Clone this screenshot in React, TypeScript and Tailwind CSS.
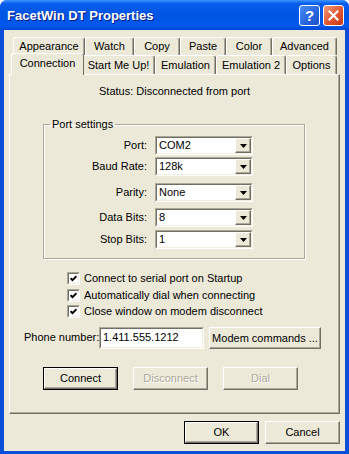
import type { ReactNode } from "react"

const raised =
  "border border-t-white border-l-white border-r-[#716f64] border-b-[#716f64] shadow-[inset_-1px_-1px_0_#aca899]"
const sunkenOuter = "border border-t-[#aca899] border-l-[#aca899] border-r-white border-b-white"
const sunkenInner = "border border-t-[#716f64] border-l-[#716f64] border-r-[#f1efe2] border-b-[#f1efe2]"

function Button({ children, def, disabled, w = "w-[75px]", h = "h-[23px]" }: { children: ReactNode; def?: boolean; disabled?: boolean; w?: string; h?: string }) {
  return (
    <div className={`${w} ${h} ${def ? "border border-black" : ""} flex shrink-0`}>
      <div className={`flex flex-1 items-center justify-center bg-[#ece9d8] ${raised}`}>
        <span className={`whitespace-nowrap ${disabled ? "text-[#aca899] [text-shadow:1px_1px_0_#fff]" : ""}`}>{children}</span>
      </div>
    </div>
  )
}

function Combo({ value }: { value: string }) {
  return (
    <div className={`flex h-[19px] w-[98px] ${sunkenOuter}`}>
      <div className={`flex flex-1 items-center bg-white ${sunkenInner}`}>
        <span className="flex-1 pl-[2px]">{value}</span>
        <div className={`flex h-full w-[16px] items-center justify-center bg-[#ece9d8] ${raised}`}>
          <svg width="7" height="4" viewBox="0 0 7 4">
            <path d="M0 0h7L3.5 4z" fill="#000" />
          </svg>
        </div>
      </div>
    </div>
  )
}

function Check({ label, className = "" }: { label: string; className?: string }) {
  return (
    <div className={`flex h-[13px] items-center ${className}`}>
      <div className={`flex h-[13px] w-[13px] ${sunkenOuter}`}>
        <div className={`flex flex-1 items-center justify-center bg-white ${sunkenInner}`}>
          <svg width="7" height="7" viewBox="0 0 7 7">
            <path d="M0.5 3.2 L2.5 5.2 L6.5 1.2" stroke="#000" strokeWidth="2" fill="none" />
          </svg>
        </div>
      </div>
      <span className="ml-[4px]">{label}</span>
    </div>
  )
}

function Row({ label, value, className = "" }: { label: string; value: string; className?: string }) {
  return (
    <div className={`flex items-center ${className}`}>
      <span className="w-[104px] pr-[1px] text-right">{label}</span>
      <div className="ml-[7px]">
        <Combo value={value} />
      </div>
    </div>
  )
}

const tab =
  "flex items-center justify-center bg-[#ece9d8] border-l border-t border-r border-l-white border-t-white border-r-[#716f64] rounded-t-[3px] shadow-[inset_-1px_0_0_#aca899]"

export default function App() {
  return (
    <div className="flex h-[454px] w-[349px] flex-col rounded-t-[7px] bg-[#0a4fdc] px-[4px] pb-[3px] font-['Liberation_Sans',Arial,sans-serif] text-[11px] leading-[13px] text-black">
      {/* title bar */}
      <div className="-mx-[4px] flex h-[30px] items-center rounded-t-[7px] bg-[linear-gradient(to_bottom,#3d95ff,#0a5eef_12%,#0054e3_50%,#0058ee_85%,#0046d5)] pl-[7px] pr-[5px]">
        <span className="font-['Liberation_Sans',Arial,sans-serif] text-[13px] font-bold text-white [text-shadow:1px_1px_0_#0a1a80]">
          FacetWin DT Properties
        </span>
        <div className="ml-auto flex gap-[3px]">
          <div className="flex h-[21px] w-[21px] items-center justify-center rounded-[3px] border border-white bg-[linear-gradient(135deg,#4e8bf5,#2663de_60%,#1d4fc6)]">
            <span className="font-['Liberation_Sans',Arial,sans-serif] text-[15px] font-bold leading-none text-white">?</span>
          </div>
          <div className="flex h-[21px] w-[21px] items-center justify-center rounded-[3px] border border-white bg-[linear-gradient(135deg,#f09a7c,#e2542f_55%,#c23a1a)]">
            <svg width="11" height="11" viewBox="0 0 11 11">
              <path d="M1.5 1.5 L9.5 9.5 M9.5 1.5 L1.5 9.5" stroke="#fff" strokeWidth="2.2" strokeLinecap="square" />
            </svg>
          </div>
        </div>
      </div>

      {/* dialog body */}
      <div className="flex flex-1 flex-col bg-[#ece9d8] pt-[7px]">
        {/* tab rows */}
        <div className="ml-[9px] flex h-[18px]">
          <div className={`${tab} w-[72px]`}>Appearance</div>
          <div className={`${tab} w-[49px]`}>Watch</div>
          <div className={`${tab} w-[46px]`}>Copy</div>
          <div className={`${tab} w-[46px]`}>Paste</div>
          <div className={`${tab} w-[46px]`}>Color</div>
          <div className={`${tab} w-[65px]`}>Advanced</div>
        </div>
        <div className="ml-[9px] flex h-[19px] items-end">
          <div className={`${tab} relative z-10 -mx-[2px] -mb-px h-[22px] w-[73px] pb-[2px] shadow-none`}>Connection</div>
          <div className={`${tab} h-full w-[73px]`}>Start Me Up!</div>
          <div className={`${tab} h-full w-[61px]`}>Emulation</div>
          <div className={`${tab} h-full w-[70px]`}>Emulation 2</div>
          <div className={`${tab} h-full w-[51px]`}>Options</div>
        </div>

        {/* tab page */}
        <div className={`ml-[5px] flex h-[340px] w-[331px] flex-col ${raised} pt-[10px]`}>
          <div className="text-center">Status: Disconnected from port</div>

          <fieldset className="ml-[33px] mt-[20px] w-[262px] border border-[#aca899] px-0 pb-[9px] shadow-[1px_1px_0_#fff,inset_1px_1px_0_#fff]">
            <legend className="ml-[6px] px-[2px]">Port settings</legend>
            <Row label="Port:" value="COM2" className="mt-[5px]" />
            <Row label="Baud Rate:" value="128k" className="mt-[2px]" />
            <Row label="Parity:" value="None" className="mt-[7px]" />
            <Row label="Data Bits:" value="8" className="mt-[6px]" />
            <Row label="Stop Bits:" value="1" className="mt-[3px]" />
          </fieldset>

          <div className="ml-[57px] mt-[13px] flex flex-col">
            <Check label="Connect to serial port on Startup" />
            <Check label="Automatically dial when connecting" className="mt-[4px]" />
            <Check label="Close window on modem disconnect" className="mt-[3px]" />
          </div>

          <div className="ml-[14px] mt-[8px] flex items-center">
            <span className="w-[75px] shrink-0 whitespace-nowrap">Phone number:</span>
            <div className={`flex h-[22px] w-[105px] shrink-0 ${sunkenOuter}`}>
              <div className={`flex flex-1 items-center bg-white pl-[2px] ${sunkenInner}`}>1.411.555.1212</div>
            </div>
            <div className="ml-[5px] mt-[1px]">
              <Button w="w-[112px]" h="h-[22px]">Modem commands ...</Button>
            </div>
          </div>

          <div className="ml-[33px] mt-[18px] flex gap-[15px]">
            <Button def>Connect</Button>
            <Button disabled>Disconnect</Button>
            <Button disabled>Dial</Button>
          </div>
        </div>

        {/* OK / Cancel */}
        <div className="mt-[7px] flex justify-end gap-[6px] pr-[5px]">
          <Button def>OK</Button>
          <Button>Cancel</Button>
        </div>
      </div>
    </div>
  )
}
